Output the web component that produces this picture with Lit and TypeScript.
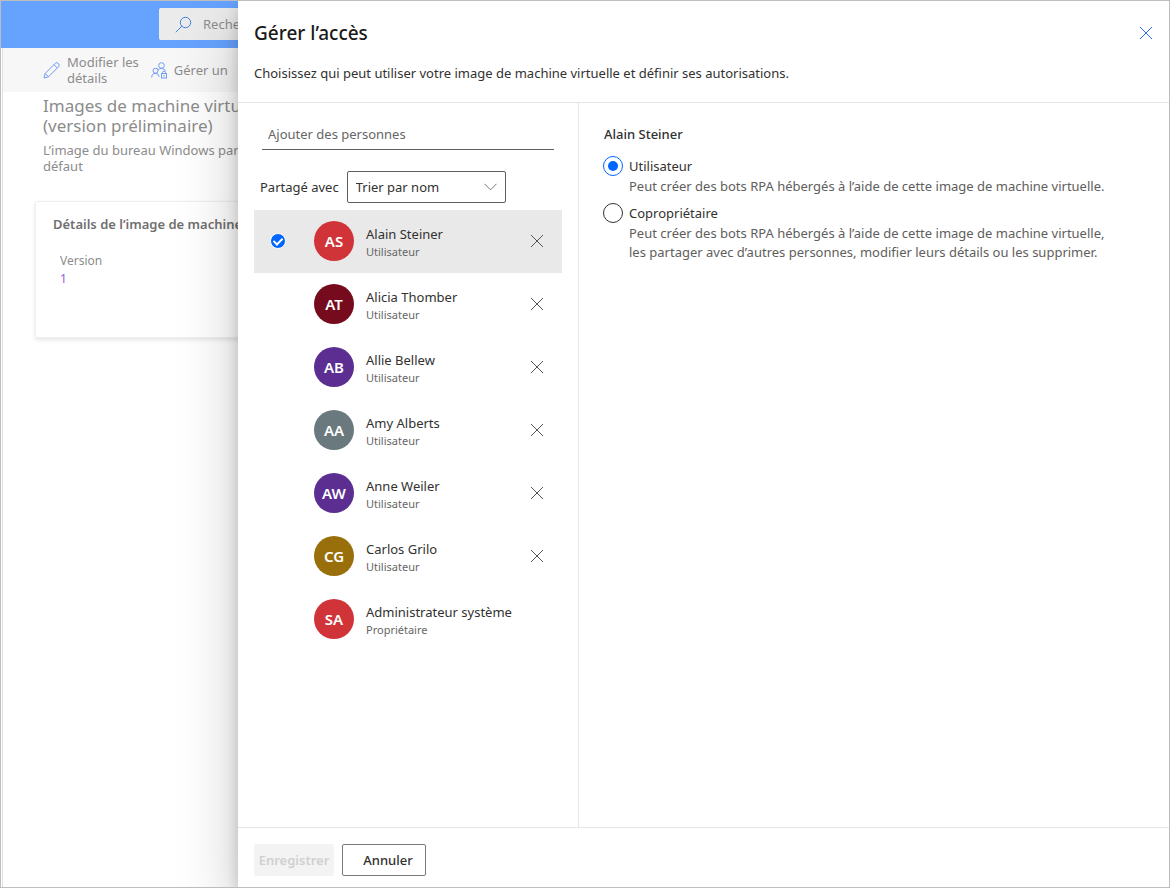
import { LitElement, html, css, svg } from "lit";
import { customElement, state } from "lit/decorators.js";
import { classMap } from "lit/directives/class-map.js";

interface Person {
  name: string;
  role: string;
  initials: string;
  color: string;
  removable: boolean;
}

const PEOPLE: Person[] = [
  { name: "Alain Steiner", role: "Utilisateur", initials: "AS", color: "#d13438", removable: true },
  { name: "Alicia Thomber", role: "Utilisateur", initials: "AT", color: "#750b1c", removable: true },
  { name: "Allie Bellew", role: "Utilisateur", initials: "AB", color: "#5c2e91", removable: true },
  { name: "Amy Alberts", role: "Utilisateur", initials: "AA", color: "#69797e", removable: true },
  { name: "Anne Weiler", role: "Utilisateur", initials: "AW", color: "#5c2e91", removable: true },
  { name: "Carlos Grilo", role: "Utilisateur", initials: "CG", color: "#986f0b", removable: true },
  { name: "Administrateur système", role: "Propriétaire", initials: "SA", color: "#d13438", removable: false },
];

const cross = html`<svg width="14" height="14" viewBox="0 0 14 14" fill="none" stroke="currentColor" aria-hidden="true">
  ${svg`<path d="M1 1L13 13M13 1L1 13" />`}
</svg>`;

@customElement("app-root")
export class AppRoot extends LitElement {
  @state() private selected = 0;
  @state() private level = "user";

  static styles = css`
    :host {
      display: block;
      font-family: "Noto Sans", sans-serif;
      font-size: 13px;
      line-height: 20px;
      color: #323130;
    }
    * {
      box-sizing: border-box;
    }
    button,
    input,
    select {
      font: inherit;
      color: inherit;
      margin: 0;
    }
    button {
      padding: 0;
      border: none;
      background: none;
    }
    svg {
      display: block;
      flex: none;
    }
    h1,
    h2,
    h3,
    p,
    ul,
    dl,
    dd,
    fieldset {
      margin: 0;
      padding: 0;
      border: none;
    }
    .shell {
      display: grid;
      grid-template-columns: 237px minmax(0, 1fr);
      min-height: 100vh;
      border: 1px solid #bdbdbd;
      overflow: hidden;
      background: #fff;
    }

    /* page behind the panel */
    .page {
      overflow: hidden;
      white-space: nowrap;
      color: #8c8c8c;
      display: flex;
      flex-direction: column;
    }
    .topbar {
      background: #66a3ff;
      height: 47px;
      flex: none;
      padding: 7px 0 8px 158px;
    }
    .search {
      display: flex;
      align-items: center;
      gap: 11px;
      width: 400px;
      height: 32px;
      padding-left: 16px;
      background: #ebebeb;
      border-radius: 2px;
      color: #3f82e0;
    }
    .search input {
      border: none;
      background: none;
      padding: 0;
      color: #8c8c8c;
    }
    .search input::placeholder {
      color: #8c8c8c;
      opacity: 1;
    }
    .body {
      flex: 1;
      margin-left: 1px;
      border-left: 1px solid #e0e0e0;
      background: #fff;
    }
    .commands {
      display: flex;
      align-items: center;
      gap: 12px;
      height: 44px;
      padding-left: 40px;
      background: #f7f7f7;
    }
    .command {
      display: flex;
      align-items: center;
      gap: 7px;
      text-align: left;
      line-height: 16px;
      height: 40px;
    }
    .command svg {
      color: #6f9cf5;
    }
    .heading {
      padding: 4px 0 0 40px;
    }
    .heading h2 {
      font-size: 17px;
      line-height: 20px;
      font-weight: 400;
      margin-bottom: 6px;
    }
    .heading p {
      line-height: 16px;
    }
    .card {
      width: 400px;
      min-height: 137px;
      margin: 27px 0 0 32px;
      padding: 12px 17px;
      border: 1px solid #f0f0f0;
      border-radius: 2px;
      box-shadow: 0 2px 4px rgba(0, 0, 0, 0.1);
    }
    .card h3 {
      font-size: 13px;
      line-height: 20px;
      font-weight: 600;
      color: #707070;
    }
    .card dl {
      padding: 18px 0 0 7px;
      font-size: 12px;
      line-height: 18px;
    }
    .card dd {
      color: #9460d6;
    }

    /* panel */
    .panel {
      position: relative;
      display: flex;
      flex-direction: column;
      background: #fff;
      box-shadow: 0 26px 58px rgba(0, 0, 0, 0.22), 0 5px 14px rgba(0, 0, 0, 0.18);
    }
    .head {
      padding: 18px 16px 19px;
      border-bottom: 1px solid #e6e6e6;
    }
    .title {
      display: flex;
      align-items: center;
      justify-content: space-between;
      margin-bottom: 16px;
    }
    .title h1 {
      font-size: 19px;
      line-height: 28px;
      font-weight: 500;
      color: #1b1a19;
    }
    .close {
      color: #2f6bff;
    }
    .columns {
      flex: 1;
      display: grid;
      grid-template-columns: 341px minmax(0, 1fr);
    }
    .people {
      padding: 15px 16px 0;
      border-right: 1px solid #e6e6e6;
    }
    .add {
      display: block;
      width: calc(100% - 16px);
      height: 32px;
      margin: 0 8px;
      padding: 0 6px;
      border: none;
      border-bottom: 1px solid #605e5c;
      background: none;
      outline: none;
    }
    .add::placeholder {
      color: #666;
      opacity: 1;
    }
    .sort {
      display: flex;
      align-items: center;
      gap: 8px;
      padding: 21px 6px 7px;
    }
    .select {
      display: grid;
      align-items: center;
      width: 159px;
    }
    .select select,
    .select svg {
      grid-area: 1 / 1;
    }
    .select select {
      appearance: none;
      height: 32px;
      padding: 0 32px 0 8px;
      border: 1px solid #605e5c;
      border-radius: 2px;
      background: #fff;
    }
    .select svg {
      justify-self: end;
      margin-right: 9px;
      color: #777;
      pointer-events: none;
    }
    .people ul {
      list-style: none;
    }
    .person {
      display: flex;
      align-items: center;
      height: 63px;
      padding: 0 18px 1px 16px;
    }
    .person.selected {
      background: #e9e9e9;
    }
    .person input {
      appearance: none;
      display: grid;
      width: 16px;
      height: 16px;
      border-radius: 50%;
      margin-right: 28px;
      flex: none;
    }
    .person input:checked {
      background: #0066ff;
      border: 1px solid #fff;
    }
    .person input:checked::after {
      content: "";
      width: 4px;
      height: 7px;
      place-self: center;
      border: solid #fff;
      border-width: 0 2px 2px 0;
      transform: rotate(45deg);
      margin-bottom: 2px;
    }
    .who {
      flex: 1;
      display: flex;
      align-items: center;
      gap: 12px;
    }
    .avatar {
      display: grid;
      place-items: center;
      width: 40px;
      height: 40px;
      border-radius: 50%;
      color: #fff;
      font-size: 15px;
      font-weight: 600;
    }
    .who-text {
      display: flex;
      flex-direction: column;
      padding-top: 1px;
    }
    .role {
      font-size: 11px;
      line-height: 16px;
      color: #666;
    }
    .remove {
      color: #555;
    }
    .access {
      padding: 21px 24px;
    }
    .access legend {
      padding: 0 1px;
      font-weight: 500;
      margin-bottom: 12px;
    }
    .choice {
      display: grid;
      grid-template-columns: 20px minmax(0, 490px);
      gap: 1px 6px;
      align-items: center;
      margin-bottom: 7px;
    }
    .choice input {
      appearance: none;
      display: grid;
      place-items: center;
      width: 20px;
      height: 20px;
      border: 1px solid #323130;
      border-radius: 50%;
    }
    .choice input:checked {
      border-color: #0066ff;
    }
    .choice input:checked::after {
      content: "";
      width: 10px;
      height: 10px;
      border-radius: 50%;
      background: #0066ff;
    }
    .choice p {
      grid-column: 2;
      line-height: 19px;
      color: #605e5c;
    }
    .foot {
      display: flex;
      gap: 8px;
      padding: 16px 16px 11px;
      border-top: 1px solid #e6e6e6;
    }
    .foot button {
      height: 32px;
      border-radius: 2px;
    }
    .save {
      width: 80px;
      background: #f3f3f3;
      color: #d0d0d0;
      font-weight: 600;
    }
    .cancel {
      width: 84px;
      padding-left: 8px;
      border: 1px solid #7a7a7a;
      font-weight: 500;
    }
  `;

  private renderPerson(person: Person, index: number) {
    const id = `person-${index}`;
    return html`<li class=${classMap({ person: true, selected: index === this.selected })}>
      <input type="radio" name="person" id=${id} .checked=${index === this.selected} @change=${() => (this.selected = index)} />
      <label class="who" for=${id}>
        <span class="avatar" style="background:${person.color}">${person.initials}</span>
        <span class="who-text"><span>${person.name}</span><span class="role">${person.role}</span></span>
      </label>
      ${person.removable ? html`<button class="remove" type="button">${cross}</button>` : null}
    </li>`;
  }

  private renderChoice(value: string, title: string, text: unknown) {
    return html`<div class="choice">
      <input type="radio" name="level" id=${value} .checked=${this.level === value} @change=${() => (this.level = value)} />
      <label for=${value}>${title}</label>
      <p>${text}</p>
    </div>`;
  }

  render() {
    return html`<div class="shell">
      <div class="page">
        <header class="topbar">
          <label class="search">
            <svg width="17" height="17" viewBox="0 0 17 17" fill="none" stroke="currentColor" aria-hidden="true">
              <circle cx="10.5" cy="6.5" r="5.2" /><path d="M6.8 10.2L0.8 16.2" />
            </svg>
            <input type="search" placeholder="Rechercher" />
          </label>
        </header>
        <div class="body">
          <div class="commands">
            <button class="command" type="button">
              <svg width="17" height="17" viewBox="0 0 17 17" fill="none" stroke="currentColor" stroke-linejoin="round" aria-hidden="true">
                <path d="M1 16L2.2 11.4L12.4 1.2Q14 0 15.4 1.5Q16.9 3 15.7 4.6L5.5 14.8ZM2.2 11.4L5.5 14.8M11 2.6L14.3 6" />
              </svg>
              <span>Modifier les<br />détails</span>
            </button>
            <button class="command" type="button">
              <svg width="16" height="17" viewBox="0 0 16 17" fill="none" stroke="currentColor" aria-hidden="true">
                <circle cx="10.5" cy="3.5" r="2.8" /><circle cx="4.5" cy="8.7" r="2.5" />
                <path d="M.7 15.5Q.8 11.4 4.5 11.4Q7.6 11.4 8.2 14.8M7.2 8Q8.5 6.4 10.5 6.4Q13.4 6.4 14.5 9" />
                <rect x="10.5" y="11.5" width="5" height="4.5" /><path d="M11.5 11.5V10.7Q11.5 9.2 13 9.2T14.5 10.7V11.5M13 13V14.6" />
              </svg>
              <span>Gérer un</span>
            </button>
          </div>
          <div class="heading">
            <h2>Images de machine virtuelle<br />(version préliminaire)</h2>
            <p>L’image du bureau Windows par<br />défaut</p>
          </div>
          <section class="card">
            <h3>Détails de l’image de machine</h3>
            <dl><dt>Version</dt><dd>1</dd></dl>
          </section>
        </div>
      </div>

      <main class="panel">
        <div class="head">
          <div class="title">
            <h1>Gérer l’accès</h1>
            <button class="close" type="button">${cross}</button>
          </div>
          <p>Choisissez qui peut utiliser votre image de machine virtuelle et définir ses autorisations.</p>
        </div>
        <div class="columns">
          <section class="people">
            <input class="add" type="text" placeholder="Ajouter des personnes" />
            <div class="sort">
              <label for="sort">Partagé avec</label>
              <div class="select">
                <select id="sort"><option>Trier par nom</option></select>
                <svg width="13" height="8" viewBox="0 0 13 8" fill="none" stroke="currentColor" aria-hidden="true">
                  <path d="M.5 .8L6.5 6.8L12.5 .8" />
                </svg>
              </div>
            </div>
            <ul>${PEOPLE.map((p, i) => this.renderPerson(p, i))}</ul>
          </section>
          <section class="access">
            <fieldset>
              <legend>${PEOPLE[this.selected].name}</legend>
              ${this.renderChoice("user", "Utilisateur", "Peut créer des bots RPA hébergés à l’aide de cette image de machine virtuelle.")}
              ${this.renderChoice("owner", "Copropriétaire", "Peut créer des bots RPA hébergés à l’aide de cette image de machine virtuelle, les partager avec d’autres personnes, modifier leurs détails ou les supprimer.")}
            </fieldset>
          </section>
        </div>
        <footer class="foot">
          <button class="save" type="button" disabled>Enregistrer</button>
          <button class="cancel" type="button">Annuler</button>
        </footer>
      </main>
    </div>`;
  }
}
